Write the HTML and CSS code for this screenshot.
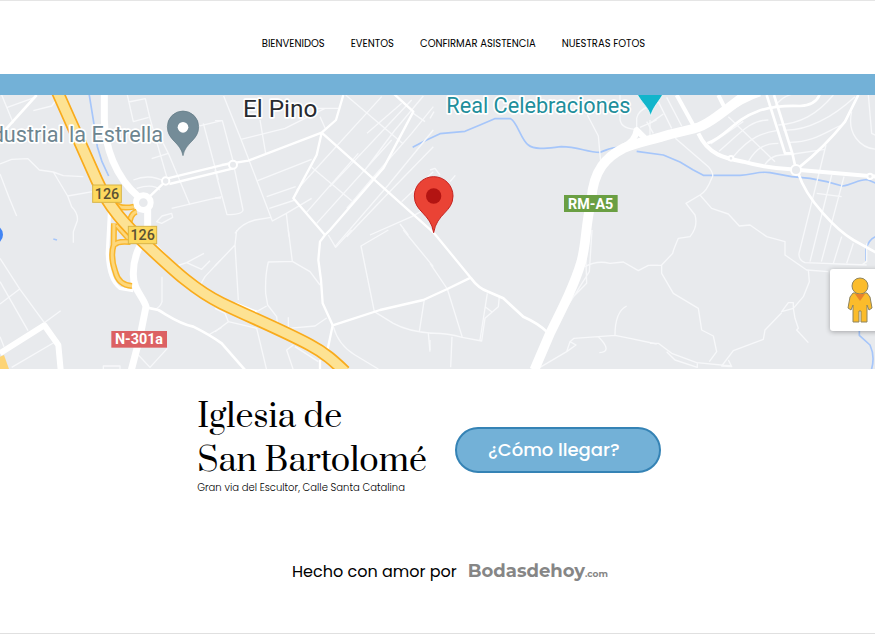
FILE: index.html
```html
<!DOCTYPE html>
<html lang="es">
<head>
<meta charset="utf-8">
<meta name="viewport" content="width=device-width, initial-scale=1">
<title>Iglesia de San Bartolomé</title>
<link rel="stylesheet" href="styles.css">
</head>
<body>
<header class="site-header">
  <nav class="nav">
    <a href="#bienvenidos">BIENVENIDOS</a>
    <a href="#eventos">EVENTOS</a>
    <a href="#confirmar">CONFIRMAR ASISTENCIA</a>
    <a href="#fotos">NUESTRAS FOTOS</a>
  </nav>
</header>
<main>
  <section class="map" aria-label="Mapa">
    <svg class="map-canvas" viewBox="0 15 2625 822" role="img">
      <rect class="land" y="15" width="2625" height="822"/>
      <!-- Streams -->
      <g class="water">
        <path d="M267 10L280 90L292 170L306 215L326 258"/>
        <path d="M1238 172L1275 152L1320 131L1395 124L1440 105L1484 86H1532C1552 96 1562 148 1585 165C1605 182 1650 173 1684 170C1735 170 1760 187 1800 187C1822 180 1840 167 1858 174M1910 184L1990 195L2040 216L2080 240L2110 256H2220C2260 254 2280 242 2310 248L2375 260L2430 265L2480 275L2527 288C2560 284 2580 264 2605 270L2632 282"/>
        <path d="M2632 438C2610 444 2602 460 2598 480V512M2578 720V736L2610 765C2624 795 2620 820 2614 840"/>
        <path d="M160 447L171 450"/>
      </g>
      <!-- Lanes, west -->
      <g class="lane">
        <path d="M5 15L40 100M22 52L105 22M100 62L155 48L180 15"/>
        <path d="M0 222L35 208L84 206L118 240L160 246L190 257L250 260M0 252L28 325L50 378M160 246L203 318L278 305M203 318L215 350Q235 370 232 392L220 425V458"/>
        <path d="M382 15L400 95L446 82M386 36L436 26L450 85L500 260M505 190L570 345M455 206L505 190L490 160M610 100L655 270M590 110L665 92M400 270Q450 250 495 275M410 295Q460 280 480 300M515 355L665 320M470 395L485 400L518 382L515 370L486 378Z"/>
        <path d="M0 505L60 598L133 698M0 575L84 722M0 642L60 596M133 698L182 662M0 740L12 770M35 832L175 750"/>
        <path d="M470 465L530 528L560 518L612 490M560 518L605 538L630 512M600 586L615 560L660 512M486 560V635Q480 655 462 658M415 795L450 832L502 775M310 840V828H360V840M625 735L665 712"/>
        <path d="M330 340Q325 440 322 490Q325 570 360 595L400 602" class="thick"/>
      </g>
      <!-- Lanes, El Pino -->
      <g class="lane" transform="translate(645 0)">
        <path d="M26 18L78 148L125 270L172 393L214 370L290 325M78 148L210 115L330 55M128 272L290 208M155 320L242 290M163 355L240 330M135 90L152 190M0 92L22 92L52 205L84 360Q82 374 36 374L0 240M0 324H18M60 430Q80 400 120 390L168 382M214 370L222 440M300 55H370M315 80L332 118"/>
        <path d="M392 15L565 162M560 40L456 130M500 20L245 300M590 30L345 290M430 190L272 370M530 150L305 400M625 18L540 120L450 240M655 50L590 130L478 258L395 355M655 120L520 285L360 470M655 170L500 330L395 440M290 232L410 332M595 70L630 95M560 335L655 245M465 435L590 380L655 345M555 402L580 435"/>
        <path d="M65 420L60 465L70 630M60 465L0 528M220 420L232 514L285 545L315 585M232 514L160 516Q150 555 152 610L158 645L185 680L187 700M65 640L125 665L155 648M220 682V715L300 708L335 684M0 655L30 670L40 695L125 715L155 840M0 725L40 695M235 765L215 780L235 840M240 770L310 815"/>
        <path d="M340 435L362 472L410 420M520 420L438 468L478 665L535 700Q580 725 655 730M628 628L613 725M640 730L645 785M355 710Q370 765 420 795L490 837M565 420L655 530"/>
      </g>
      <!-- Lanes, centre -->
      <g class="lane" transform="translate(1290 0)">
        <path d="M472 75L505 138L512 215M0 240L15 235L30 255M60 275L76 256M0 85L12 65M0 520L52 597L97 742M0 730Q45 728 97 742L155 753L165 685L205 650L208 620M172 610L150 750M165 650L185 665M66 740L62 832M0 750V780"/>
        <path d="M486 420L478 545L415 645L380 700M465 420L470 580L430 620M465 530Q500 510 540 520L580 516L625 542L655 526H685M330 832L410 785L438 765L420 755L432 745L505 740L555 736L600 745L680 762M410 785L420 755M505 740Q550 785 508 788M555 736Q555 665 590 648"/>
        <path d="M570 15V82Q568 115 615 118M620 135V85Q625 60 660 48M650 95L670 130M630 112L680 90"/>
      </g>
      <!-- Lanes, east -->
      <g class="lane" transform="translate(1950 0)">
        <path d="M25 35L65 115M50 22L95 108M0 100L40 72M0 90V140M76 145L175 230Q195 255 185 265Q170 305 150 315L108 340L135 375Q145 410 120 440L85 445Q70 480 68 490L35 525V550L70 610L145 655L155 720L190 738L200 785L178 815M150 315L185 355L235 372L268 408L300 405L350 440L405 455V495L470 540L535 545M0 526H35"/>
        <path d="M235 80L375 215M182 162L280 94M207 184C270 130 300 90 355 90M250 200C300 140 340 128 380 122M295 215C320 170 350 160 385 160M345 223C370 190 390 195 435 193M375 50C400 10 440 10 450 10M385 105C450 100 500 75 550 15M400 120C470 125 550 80 615 20M420 157C490 155 520 130 575 105M430 192L525 178"/>
        <path d="M605 65C590 130 630 175 680 178M655 15L665 130L680 138M528 165L447 490Q445 510 465 518L650 525M545 255L480 515M582 260L514 515M500 310L575 320M575 440L550 520M610 460L590 520M650 460V515L635 525"/>
        <path d="M475 540L478 575L460 620L430 655L395 665L415 638H430V655L435 685L445 715L440 720L475 758M395 668L345 720L340 748L250 782L215 828L245 830L235 810M0 760H25L65 790L140 818L245 828M50 785L75 810L142 832V820"/>
      </g>
      <!-- Secondary streets -->
      <g class="street">
        <path d="M0 137L110 15" class="medium"/>
        <path d="M430 338L490 280M500 266L700 217M508 282L700 235M665 225L745 212L965 128L1008 90L1030 15M965 128L950 195L880 325L975 435L990 420L1150 235L1240 65L1180 10M965 128L1300 427L1412 563L1342 597L1270 630L1140 660L1042 692L998 706L968 640L963 570L955 510L960 455L975 435"/>
        <path d="M1412 563Q1435 595 1465 605L1510 625L1570 680Q1615 700 1640 725" class="medium"/>
        <path d="M998 706L983 778M960 810V840"/>
        <path d="M438 652L475 660C510 680 535 700 580 710Q630 735 665 760L735 840" class="medium"/>
        <path d="M705 640L770 665"/>
        <path d="M2095 130C2125 195 2175 205 2230 215Q2300 235 2390 239L2632 260" class="wide"/>
        <path d="M2395 250C2420 330 2510 420 2560 450L2632 490" class="medium"/>
        <path d="M2300 15L2355 190H2377L2387 235M2322 15L2377 190" class="medium"/>
        <path d="M2400 230Q2470 175 2535 95L2575 15M2122 160C2180 140 2200 90 2270 65Q2320 45 2400 48Q2450 45 2460 10" class="medium"/>
        <path d="M2030 15L2085 115" class="wide"/>
        <path d="M2155 15L2180 65" class="wide"/>
      </g>
      <!-- Main roads -->
      <g class="road">
        <path d="M0 790L133 706L175 765L182 840"/>
        <path class="broad" d="M313 10V90C315 170 345 260 415 320M443 355V430Q398 490 400 555C400 600 430 620 438 650L420 740L394 840"/>
        <path class="trunk" d="M1603 840L1650 730C1690 650 1725 580 1744 515C1760 455 1755 415 1774 330C1780 240 1820 200 1870 175C1920 155 1950 152 2010 133L2085 115C2120 108 2170 65 2250 5"/>
        <path d="M2085 115L2160 75Q2230 25 2280 10M1870 170Q1905 155 1910 120L1945 155"/>
      </g>
      <circle class="ring main-ring" cx="430" cy="338" r="22"/>
      <circle class="ring" cx="497" cy="273" r="11"/>
      <circle class="ring" cx="699" cy="224" r="12"/>
      <circle class="ring" cx="2388" cy="240" r="15"/>
      <circle class="ring" cx="2193" cy="205" r="7"/>
      <circle class="ring" cx="2610" cy="259" r="8"/>
      <!-- Motorway and ramps -->
      <g>
        <path class="ramp-edge" d="M340 335Q355 360 402 350M410 365Q390 370 387 410M342 400L341 465Q330 500 346 545Q355 585 396 588M350 405L385 445M343 466Q350 452 392 456"/>
        <path class="ramp" d="M340 335Q355 360 402 350M410 365Q390 370 387 410M342 400L341 465Q330 500 346 545Q355 585 396 588M350 405L385 445M343 466Q350 452 392 456"/>
      </g>
      <path class="motorway-edge" d="M172 5C210 90 250 180 290 270C325 350 375 405 440 465C510 530 580 599 665 640C750 681 850 722 930 765C975 789 1000 812 1035 845"/>
      <path class="motorway" d="M172 5C210 90 250 180 290 270C325 350 375 405 440 465C510 530 580 599 665 640C750 681 850 722 930 765C975 789 1000 812 1035 845"/>
      <path class="ochre" d="M0 800L12 795L28 840H0Z"/>
      <!-- Road shields -->
      <g class="shield">
        <rect class="yellow" x="278" y="285" width="86" height="52"/>
        <text class="dark" x="321" y="326">126</text>
        <rect class="yellow" x="385" y="409" width="85" height="52"/>
        <text class="dark" x="428" y="450">126</text>
        <rect class="red" x="334" y="723" width="167" height="50"/>
        <text x="417" y="763">N-301a</text>
        <rect class="green" x="1692" y="315" width="161" height="51"/>
        <text x="1772" y="356">RM-A5</text>
      </g>
      <!-- Place names and pins -->
      <text class="place slate" x="489" y="155" text-anchor="end">Industrial la Estrella</text>
      <text class="place town" x="729" y="82">El Pino</text>
      <text class="place teal" x="1339" y="68">Real Celebraciones</text>
      <path class="pin-slate" d="M549 197C542 156 502 152 502 110A47 47 0 0 1 596 110C596 152 556 156 549 197Z"/>
      <circle cx="549" cy="112" r="16" fill="#fff"/>
      <path class="pin-teal" d="M1910 10H1990C1978 35 1962 45 1952 77C1944 50 1926 40 1910 10Z"/>
      <circle class="pin-blue" cx="-20" cy="434" r="29"/>
      <path class="pin-red" d="M1301 428C1292 370 1243 366 1243 318A58 58 0 0 1 1359 318C1359 366 1310 370 1301 428Z"/>
      <circle cx="1301" cy="318" r="23" fill="#b31412"/>
    </svg>
    <button class="pegman" type="button" aria-label="Street View">
      <svg viewBox="0 0 26 46" width="26" height="46" aria-hidden="true">
        <path d="M6 16H20L23 20L25 31L22 33L20 28V45H14V34H12V45H6V28L4 33L1 31L3 20Z"/>
        <circle cx="13" cy="9" r="8"/>
        <path class="scarf" d="M8 17H18L13 24Z"/>
      </svg>
    </button>
  </section>
  <section class="venue">
    <div>
      <h1>Iglesia de<br>San Bartolomé</h1>
      <p>Gran via del Escultor, Calle Santa Catalina</p>
    </div>
    <a class="directions" href="#llegar">¿Cómo llegar?</a>
  </section>
</main>
<footer class="site-footer">
  <span>Hecho con amor por</span>
  <a class="brand" href="#bodasdehoy">Bodasdehoy<small>.com</small></a>
</footer>
</body>
</html>
```
FILE: styles.css
```css
* { box-sizing: border-box; }

body {
  margin: 0;
  min-height: 100vh;
  background: #fff;
  color: #000;
  font-family: Poppins, Inter, sans-serif;
  border-top: 1px solid #e5e5e5;
  border-bottom: 1px solid #e0e0e0;
}

a { color: inherit; text-decoration: none; }

.site-header {
  padding: 32px 0 20px 32px;
  border-bottom: 21px solid #73b1d7;
}

.nav {
  display: flex;
  justify-content: center;
  gap: 26px;
  font-size: 10px;
  line-height: 21px;
}

.map {
  position: relative;
  overflow: hidden;
}

.map-canvas {
  display: block;
  width: 100%;
  height: auto;
  font-family: Roboto, sans-serif;
}

.land { fill: #e8eaed; }

.water, .lane, .street, .road {
  fill: none;
  stroke: #fff;
  stroke-linejoin: round;
}

.water { stroke: #a6c6fa; stroke-width: 5; }
.lane { stroke: #f7f8fa; stroke-width: 4; }
.lane .thick { stroke: #fff; stroke-width: 10; }
.street { stroke-width: 7; }
.street .medium { stroke-width: 8; }
.street .wide { stroke-width: 12; }
.road { stroke-width: 18; }
.road .broad { stroke-width: 21; }
.road .trunk { stroke-width: 29; }

.ring { fill: #e8eaed; stroke: #fff; stroke-width: 6; }
.main-ring { stroke-width: 18; }

.motorway-edge, .motorway, .ramp-edge, .ramp { fill: none; }
.motorway-edge { stroke: #f9ab1c; stroke-width: 39; }
.motorway { stroke: #fde293; stroke-width: 29; }
.ramp-edge { stroke: #f9b62d; stroke-width: 18; }
.ramp { stroke: #fdd77b; stroke-width: 9; }
.ochre { fill: #fdd475; }

.shield text {
  fill: #fff;
  font-size: 43px;
  font-weight: 700;
  text-anchor: middle;
}
.shield .dark { fill: #5b5234; font-weight: 500; }
.shield .yellow { fill: #fdd95f; stroke: #d9b548; stroke-width: 3; }
.shield .red { fill: #dc6163; }
.shield .green { fill: #6a9f43; }

.place {
  font-size: 65px;
  stroke: #fff;
  stroke-width: 10px;
  stroke-linejoin: round;
  paint-order: stroke;
}
.slate { fill: #6d8590; }
.town { fill: #282b30; font-size: 73px; }
.teal { fill: #218e9b; }

.pin-slate { fill: #748c98; stroke: #607984; stroke-width: 2; }
.pin-teal { fill: #12b5cb; stroke: #fff; stroke-width: 2; }
.pin-blue { fill: #4285f4; }
.pin-red { fill: #ea4335; stroke: #c5221f; stroke-width: 3; }

.pegman {
  position: absolute;
  right: -15px;
  bottom: 38px;
  display: grid;
  place-items: center;
  width: 60px;
  height: 62px;
  padding: 0;
  border: 0;
  border-radius: 3px;
  background: #fff;
  box-shadow: 0 1px 5px rgba(0, 0, 0, 0.3);
}
.pegman path, .pegman circle { fill: #fbbc2b; stroke: #8d8460; stroke-width: 1; }
.pegman .scarf { fill: #e8832c; stroke: none; }

.venue {
  display: flex;
  justify-content: center;
  align-items: center;
  gap: 28px;
  padding: 26px 17px 0 0;
}

h1 {
  margin: 0;
  font-family: Prata, "Bodoni Moda", "Libre Bodoni", "Old Standard TT", "Playfair Display", "Liberation Serif", serif;
  font-size: 32px;
  font-weight: 400;
  line-height: 44px;
}

.venue p {
  margin: 0;
  padding-bottom: 12px;
  font-size: 10px;
  line-height: 10px;
  font-weight: 300;
}

.directions {
  width: 206px;
  padding: 0 8px 0 0;
  border: 2px solid #3583b5;
  border-radius: 23px;
  background: #73b1d7;
  color: #fff;
  font-size: 18px;
  font-weight: 500;
  line-height: 42px;
  text-align: center;
}

.site-footer {
  display: flex;
  justify-content: center;
  align-items: baseline;
  gap: 11px;
  padding: 52px 0 40px 25px;
  font-size: 16px;
  line-height: 28px;
}

.brand {
  color: #868686;
  font-family: Montserrat, Poppins, sans-serif;
  font-size: 18px;
  font-weight: 700;
}
.brand small { font-size: 9px; }
```
